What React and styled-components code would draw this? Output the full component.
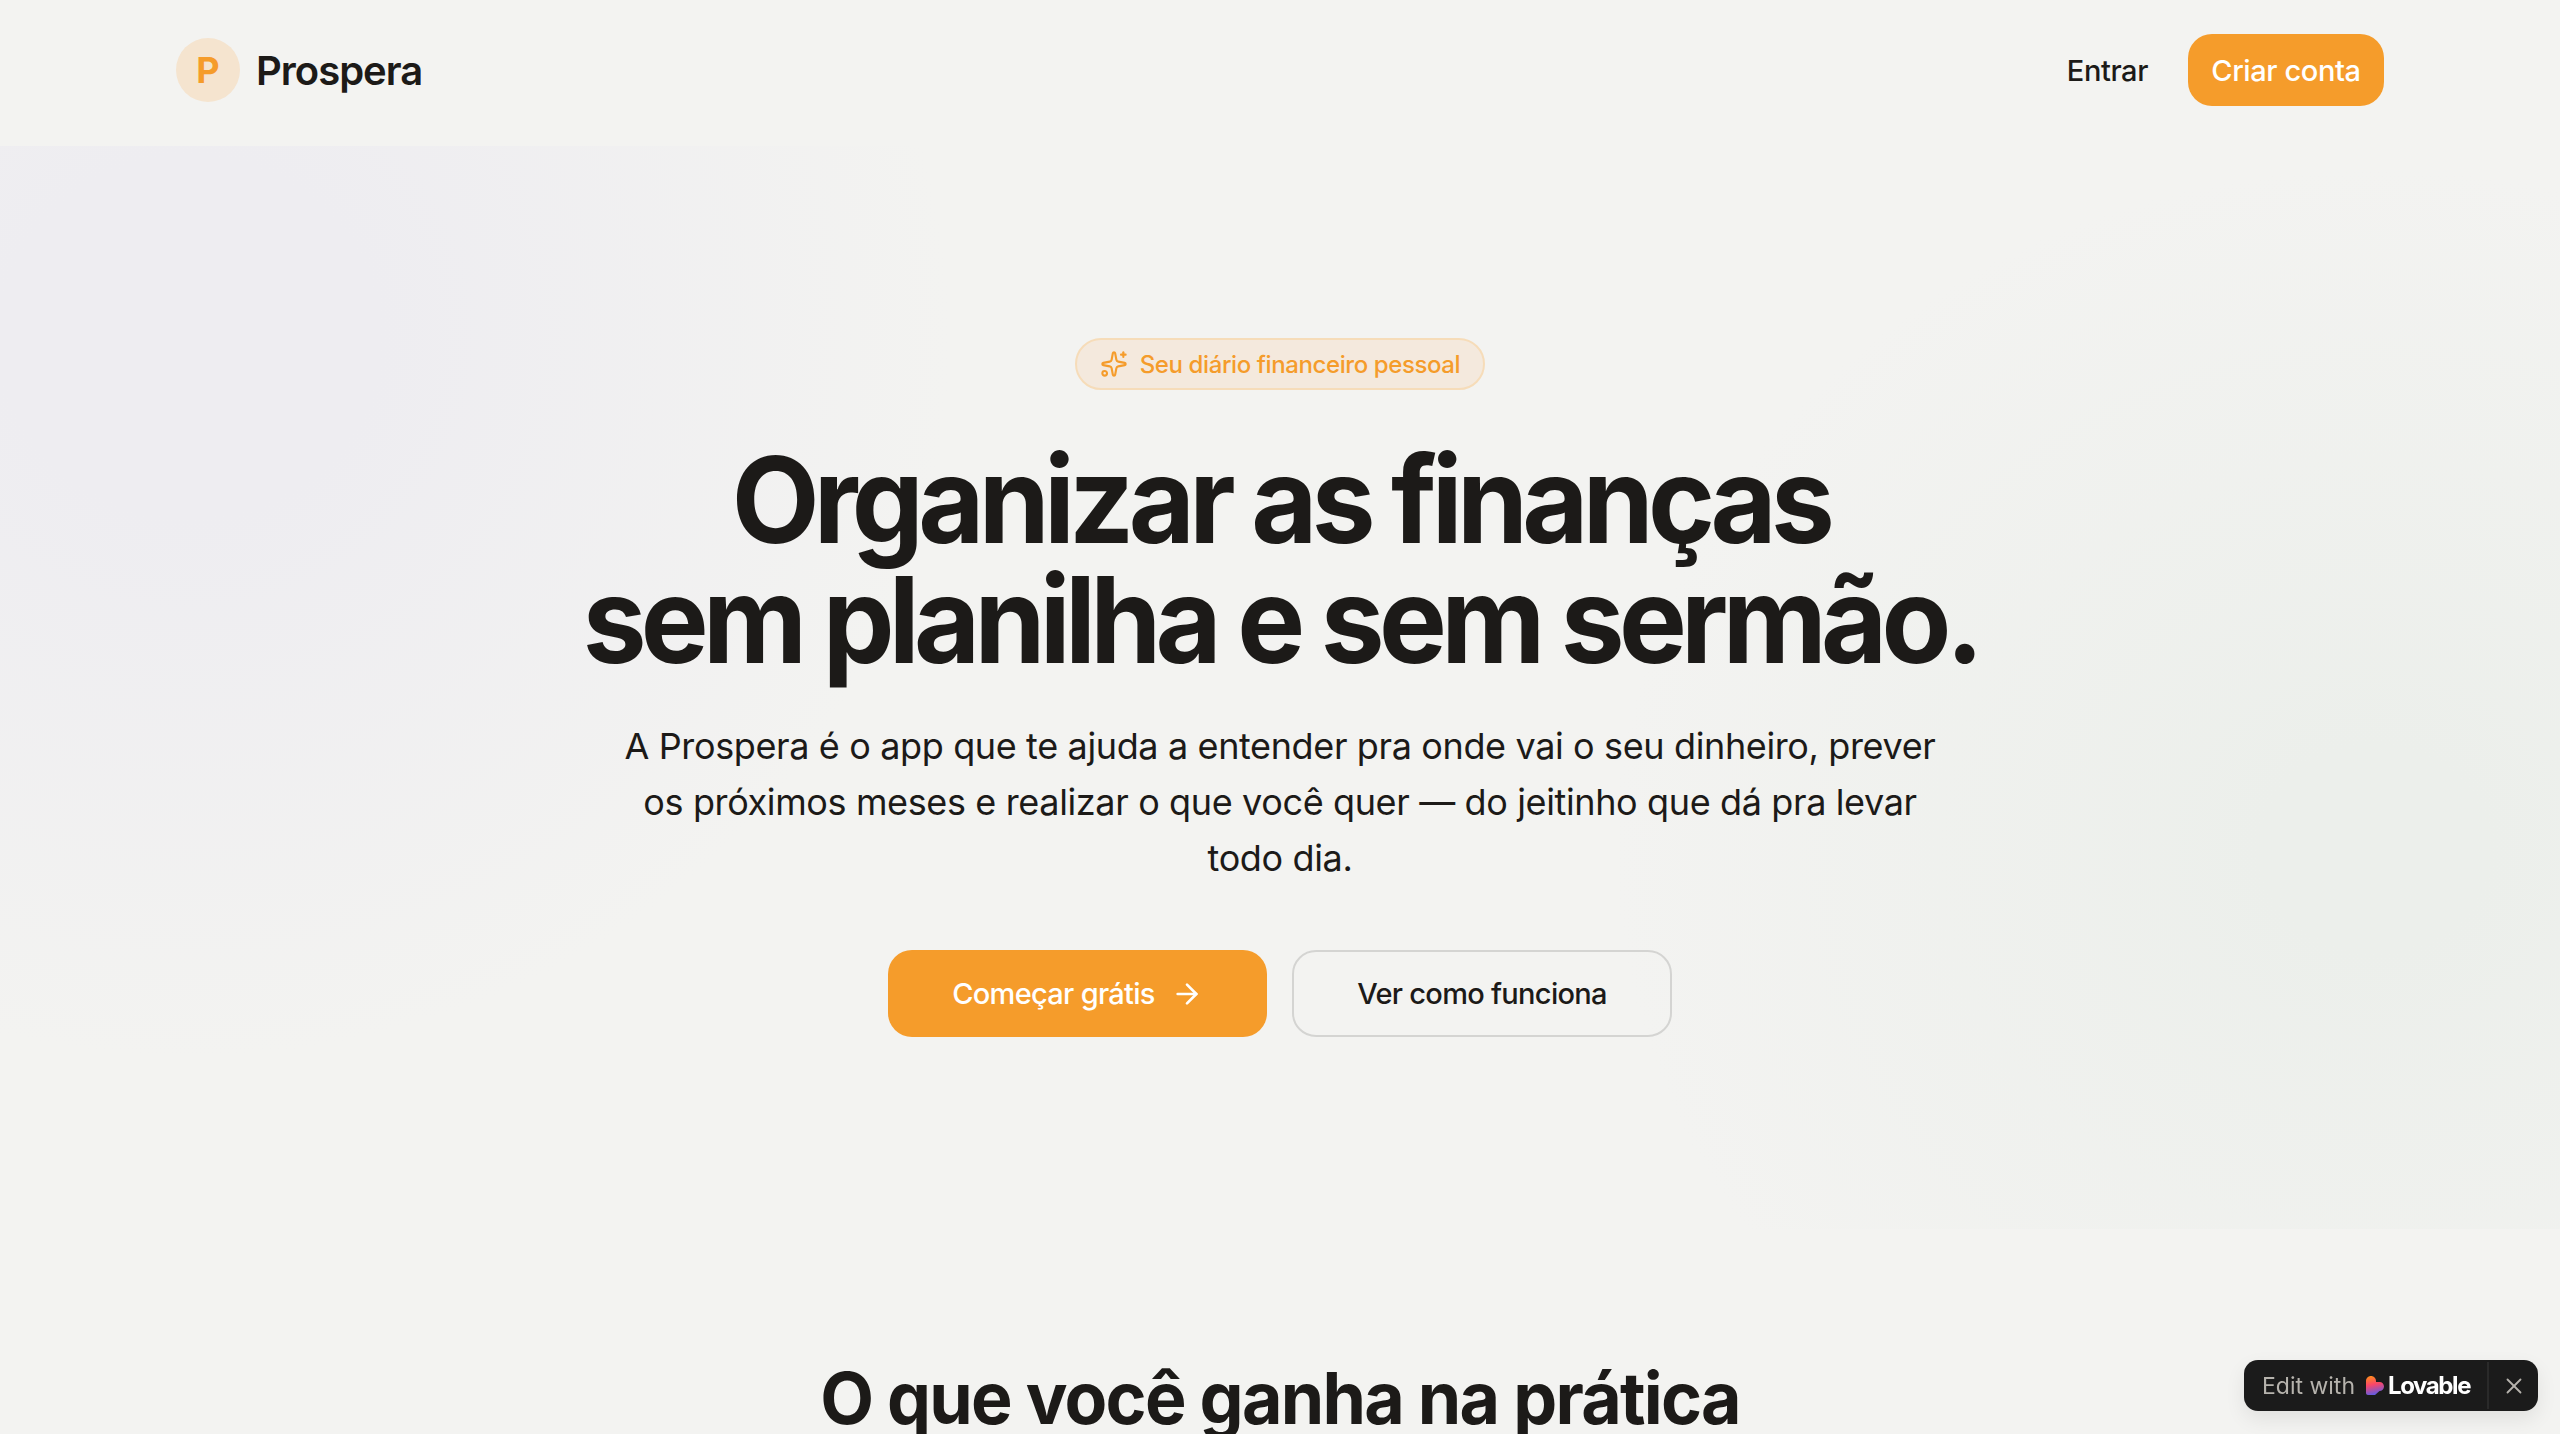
import React from "react";
import styled, { createGlobalStyle } from "styled-components";
import { ArrowRight, Sparkles, X } from "lucide-react";

const GlobalStyle = createGlobalStyle`
  html, body {
    margin: 0;
    padding: 0;
    background: #f3f3f1;
    color: #1c1a18;
    font-family: "Inter", "Liberation Sans", sans-serif;
    overflow: hidden;
  }
  * { box-sizing: border-box; }
`;

const Page = styled.div`
  height: 1434px;
  overflow: hidden;
`;

const Nav = styled.nav`
  height: 146px;
  padding: 0 176px 6px;
  display: flex;
  align-items: center;
  justify-content: space-between;
`;

const Brand = styled.div`
  display: flex;
  align-items: center;
  gap: 16px;
`;

const BrandMark = styled.div`
  width: 64px;
  height: 64px;
  border-radius: 50%;
  background: #f5e4cf;
  color: #f59c2b;
  display: flex;
  align-items: center;
  justify-content: center;
  font-size: 36px;
  font-weight: 700;
`;

const BrandName = styled.span`
  font-size: 40px;
  font-weight: 600;
  letter-spacing: -1px;
`;

const NavActions = styled.div`
  display: flex;
  align-items: center;
  gap: 40px;
`;

const NavLink = styled.a`
  font-size: 29px;
  font-weight: 500;
  letter-spacing: -0.4px;
`;

const NavButton = styled.a`
  height: 72px;
  width: 196px;
  border-radius: 24px;
  background: #f59c2b;
  color: #fff;
  display: flex;
  align-items: center;
  justify-content: center;
  font-size: 29px;
  font-weight: 500;
  letter-spacing: -0.4px;
`;

const Hero = styled.section`
  padding: 192px 0;
  display: flex;
  flex-direction: column;
  align-items: center;
  background:
    radial-gradient(ellipse 760px 720px at 190px 191px, #eeedf1 0%, #eeedf1 25%, rgba(243, 243, 241, 0) 100%),
    radial-gradient(ellipse 760px 680px at 2375px 703px, #ecefeb 0%, #ecefeb 15%, rgba(243, 243, 241, 0) 100%);
`;

const Badge = styled.div`
  height: 52px;
  width: 410px;
  border: 2px solid #f6dcb9;
  border-radius: 26px;
  background: #f4e9dd;
  color: #f59c2b;
  display: flex;
  align-items: center;
  justify-content: center;
  gap: 12px;
  font-size: 24px;
  font-weight: 500;
  letter-spacing: -0.4px;
`;

const Title = styled.h1`
  margin: 50px 0 0;
  font-size: 120px;
  line-height: 120px;
  font-weight: 700;
  letter-spacing: -6px;
  text-align: center;
  white-space: nowrap;
  transform: scaleX(0.95);
`;

const Lead = styled.p`
  margin: 38px 0 0;
  width: 1320px;
  font-size: 36px;
  line-height: 56px;
  letter-spacing: -0.37px;
  text-align: center;
`;

const Actions = styled.div`
  margin-top: 64px;
  display: flex;
  gap: 25px;
`;

const ActionButton = styled.a`
  height: 87px;
  width: ${(p) => (p.$primary ? "379px" : "380px")};
  border-radius: 24px;
  border: ${(p) => (p.$primary ? "none" : "2px solid #d4d4d2")};
  background: ${(p) => (p.$primary ? "#f59c2b" : "transparent")};
  color: ${(p) => (p.$primary ? "#fff" : "#1c1a18")};
  display: flex;
  align-items: center;
  justify-content: center;
  gap: 16px;
  font-size: 29px;
  font-weight: 500;
  letter-spacing: -0.7px;
`;

const Features = styled.section`
  padding-top: 129px;
`;

const FeaturesTitle = styled.h2`
  margin: 0;
  font-size: 72px;
  line-height: 80px;
  font-weight: 700;
  letter-spacing: -1.8px;
  text-align: center;
  transform: scaleX(0.97);
`;

const EditBadge = styled.div`
  position: fixed;
  right: 22px;
  bottom: 23px;
  width: 294px;
  height: 51px;
  border-radius: 14px;
  background: #1b1b1b;
  box-shadow: 0 8px 20px rgba(0, 0, 0, 0.08);
  display: flex;
  align-items: center;
`;

const EditLink = styled.div`
  flex: 1;
  padding-left: 18px;
  display: flex;
  align-items: center;
  gap: 10px;
`;

const EditText = styled.span`
  font-size: 23px;
  color: #b6b3ad;
`;

const LovableName = styled.span`
  margin-left: -7px;
  font-size: 24px;
  font-weight: 700;
  letter-spacing: -1.4px;
  color: #fff;
`;

const EditClose = styled.div`
  width: 51px;
  height: 47px;
  border-left: 2px solid #2a2a2a;
  color: #b6b3ad;
  display: flex;
  align-items: center;
  justify-content: center;
`;

const LovableHeart = () => (
  <svg width="20" height="20" viewBox="0 0 20 20">
    <defs>
      <linearGradient id="lovable-heart" x1="0.3" y1="0" x2="0.5" y2="1">
        <stop offset="0" stopColor="#ff8a1e" />
        <stop offset="0.45" stopColor="#f9466a" />
        <stop offset="1" stopColor="#5a5ce8" />
      </linearGradient>
    </defs>
    <path
      d="M1 5C1 2.2 3.2 0 6 0s5 2.2 5 5v1h3.500C17 6 19 8 19 10.500S17 15 14.500 15L10 19H3C1.900 19 1 18.100 1 17Z"
      fill="url(#lovable-heart)"
    />
  </svg>
);

export default function App() {
  return (
    <Page>
      <GlobalStyle />
      <Nav>
        <Brand>
          <BrandMark>P</BrandMark>
          <BrandName>Prospera</BrandName>
        </Brand>
        <NavActions>
          <NavLink>Entrar</NavLink>
          <NavButton>Criar conta</NavButton>
        </NavActions>
      </Nav>
      <Hero>
        <Badge>
          <Sparkles size={28} strokeWidth={1.8} />
          Seu diário financeiro pessoal
        </Badge>
        <Title>
          Organizar as finanças
          <br />
          sem planilha e sem sermão.
        </Title>
        <Lead>
          A Prospera é o app que te ajuda a entender pra onde vai o seu dinheiro, prever os próximos
          meses e realizar o que você quer — do jeitinho que dá pra levar todo dia.
        </Lead>
        <Actions>
          <ActionButton $primary>
            Começar grátis
            <ArrowRight size={32} strokeWidth={2} />
          </ActionButton>
          <ActionButton>Ver como funciona</ActionButton>
        </Actions>
      </Hero>
      <Features>
        <FeaturesTitle>O que você ganha na prática</FeaturesTitle>
      </Features>
      <EditBadge>
        <EditLink>
          <EditText>Edit with</EditText>
          <LovableHeart />
          <LovableName>Lovable</LovableName>
        </EditLink>
        <EditClose>
          <X size={26} strokeWidth={1.7} />
        </EditClose>
      </EditBadge>
    </Page>
  );
}
